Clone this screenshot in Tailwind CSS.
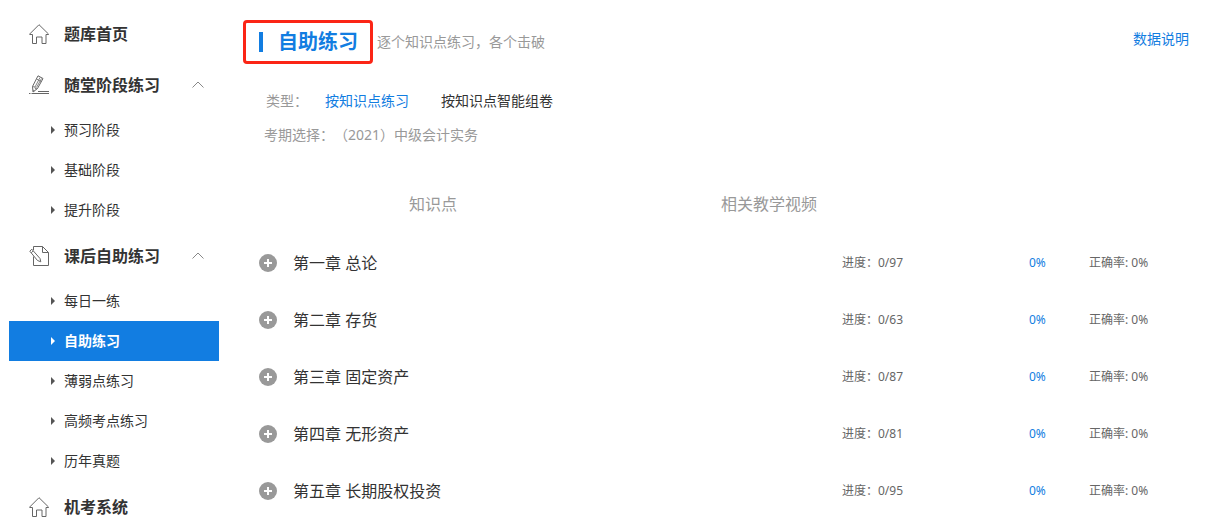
<!DOCTYPE html>
<html lang="zh-CN">
<head>
  <meta charset="UTF-8">
  <meta name="viewport" content="width=device-width, initial-scale=1">
  <title>自助练习</title>
  <script src="https://cdn.jsdelivr.net/npm/@tailwindcss/browser@4"></script>
</head>
<body class="bg-white text-[#333] font-['Noto_Sans','Noto_Sans_CJK_SC',sans-serif]">
  <!-- Shared icons -->
  <svg class="hidden">
    <symbol id="icon-home" viewBox="0 0 20 20">
      <path d="M10 .7L.7 10v.5h2.8v9h4v-6.500h5.500v6.500h4v-9h2.500v-.5z" fill="none" stroke="#666" stroke-width="1"/>
    </symbol>
    <symbol id="icon-arrow" viewBox="0 0 4 8">
      <path d="M0 0l4 4-4 4z" fill="currentColor"/>
    </symbol>
    <symbol id="icon-up" viewBox="0 0 12 7">
      <path d="M.5 6.500L6 1l5.500 5.500" fill="none" stroke="#888" stroke-width="1"/>
    </symbol>
    <symbol id="icon-plus" viewBox="0 0 18 18">
      <circle cx="9" cy="9" r="9" fill="#999"/>
      <path d="M9 5v8M5 9h8" stroke="#fff" stroke-width="2"/>
    </symbol>
  </svg>

  <div class="flex">
    <!-- Sidebar -->
    <nav class="w-[210px] shrink-0 ml-[9px] pt-2">
      <a href="#" class="flex items-center h-[51px] pl-5 gap-[15px] font-bold">
        <svg class="w-5 h-5"><use href="#icon-home"/></svg>
        题库首页
      </a>

      <button type="button" class="flex items-center w-full h-[51px] pl-5 pr-[15px] gap-[15px] font-bold">
        <svg class="w-5 h-5" viewBox="0 0 20 20" fill="none" stroke="#666">
          <path d="M3.500 11.500L9 .8l5 2.700L8.500 13.500l-4.500 3.500z"/>
          <path d="M3.500 11.500l2.500.5.500 2 2-.5M4 15l1.500 1M7.500 4l4.800 2.600M6 12L11 2.500M7.500 12.500l5-9" stroke-width=".8"/>
          <path d="M0 18.500h1.500M2.500 18.500H20M9 16.500h11"/>
        </svg>
        随堂阶段练习
        <svg class="w-3 h-[7px] ml-auto"><use href="#icon-up"/></svg>
      </button>
      <ul class="text-sm">
        <li><a href="#" class="flex items-center h-10 pl-[42px] gap-[9px]"><svg class="w-1 h-2 text-[#555]"><use href="#icon-arrow"/></svg>预习阶段</a></li>
        <li><a href="#" class="flex items-center h-10 pl-[42px] gap-[9px]"><svg class="w-1 h-2 text-[#555]"><use href="#icon-arrow"/></svg>基础阶段</a></li>
        <li><a href="#" class="flex items-center h-10 pl-[42px] gap-[9px]"><svg class="w-1 h-2 text-[#555]"><use href="#icon-arrow"/></svg>提升阶段</a></li>
      </ul>

      <button type="button" class="flex items-center w-full h-[51px] pl-5 pr-[15px] gap-[15px] font-bold">
        <svg class="w-5 h-5" viewBox="0 0 20 20" fill="none" stroke="#666">
          <path d="M4.500 4V.5h9l6 6v13h-15v-9M13.500.5v6h6"/>
          <path d="M.8 5.200l2-2L11 12.500l.8 3.300-3.300-1.300zM2.300 6.800l2-2"/>
        </svg>
        课后自助练习
        <svg class="w-3 h-[7px] ml-auto"><use href="#icon-up"/></svg>
      </button>
      <ul class="text-sm">
        <li><a href="#" class="flex items-center h-10 pl-[42px] gap-[9px]"><svg class="w-1 h-2 text-[#555]"><use href="#icon-arrow"/></svg>每日一练</a></li>
        <li><a href="#" class="flex items-center h-10 pl-[42px] gap-[9px] bg-[#127de1] text-white font-bold"><svg class="w-1 h-2"><use href="#icon-arrow"/></svg>自助练习</a></li>
        <li><a href="#" class="flex items-center h-10 pl-[42px] gap-[9px]"><svg class="w-1 h-2 text-[#555]"><use href="#icon-arrow"/></svg>薄弱点练习</a></li>
        <li><a href="#" class="flex items-center h-10 pl-[42px] gap-[9px]"><svg class="w-1 h-2 text-[#555]"><use href="#icon-arrow"/></svg>高频考点练习</a></li>
        <li><a href="#" class="flex items-center h-10 pl-[42px] gap-[9px]"><svg class="w-1 h-2 text-[#555]"><use href="#icon-arrow"/></svg>历年真题</a></li>
      </ul>

      <a href="#" class="flex items-center h-[51px] pl-5 gap-[15px] font-bold">
        <svg class="w-5 h-5"><use href="#icon-home"/></svg>
        机考系统
      </a>
    </nav>

    <!-- Main content -->
    <main class="flex-1 pl-6 pr-[39px] pt-5 text-sm">
      <header class="flex items-center">
        <div class="flex items-center h-11 pl-[13px] pr-3 gap-[15px] border-3 border-[#fb2516] rounded">
          <span class="w-1 h-5 bg-[#127de1]"></span>
          <h1 class="text-xl font-bold text-[#127de1]">自助练习</h1>
        </div>
        <p class="ml-1 text-[#999]">逐个知识点练习，各个击破</p>
        <a href="#" class="ml-auto mb-1.5 text-[#127de1]">数据说明</a>
      </header>

      <div class="flex items-center h-[34px] mt-5 pl-[23px] text-[#999]">
        <span class="w-[59px]">类型：</span>
        <a href="#" class="mr-8 text-[#127de1]">按知识点练习</a>
        <a href="#" class="text-[#333]">按知识点智能组卷</a>
      </div>
      <div class="flex items-center h-[34px] pl-[21px] text-[#999]">
        <span>考期选择：</span>
        <span>（2021）中级会计实务</span>
      </div>

      <div class="mt-[22px] pl-4">
        <table class="w-full table-fixed text-xs text-[#666]">
          <thead>
            <tr class="h-[60px] text-base text-[#999]">
              <th class="font-normal">知识点</th>
              <th class="w-[324px] font-normal">相关教学视频</th>
              <th class="w-[138px]"></th>
              <th class="w-[120px]"></th>
            </tr>
          </thead>
          <tbody>
            <tr class="h-[57px]">
              <td><div class="flex items-center gap-4 text-base text-[#333]"><button type="button" aria-label="展开"><svg class="w-[18px] h-[18px]"><use href="#icon-plus"/></svg></button>第一章 总论</div></td>
              <td class="pl-[235px]">进度：0/97</td>
              <td class="pl-[98px] text-[#127de1]">0%</td>
              <td class="pl-5">正确率: 0%</td>
            </tr>
            <tr class="h-[57px]">
              <td><div class="flex items-center gap-4 text-base text-[#333]"><button type="button" aria-label="展开"><svg class="w-[18px] h-[18px]"><use href="#icon-plus"/></svg></button>第二章 存货</div></td>
              <td class="pl-[235px]">进度：0/63</td>
              <td class="pl-[98px] text-[#127de1]">0%</td>
              <td class="pl-5">正确率: 0%</td>
            </tr>
            <tr class="h-[57px]">
              <td><div class="flex items-center gap-4 text-base text-[#333]"><button type="button" aria-label="展开"><svg class="w-[18px] h-[18px]"><use href="#icon-plus"/></svg></button>第三章 固定资产</div></td>
              <td class="pl-[235px]">进度：0/87</td>
              <td class="pl-[98px] text-[#127de1]">0%</td>
              <td class="pl-5">正确率: 0%</td>
            </tr>
            <tr class="h-[57px]">
              <td><div class="flex items-center gap-4 text-base text-[#333]"><button type="button" aria-label="展开"><svg class="w-[18px] h-[18px]"><use href="#icon-plus"/></svg></button>第四章 无形资产</div></td>
              <td class="pl-[235px]">进度：0/81</td>
              <td class="pl-[98px] text-[#127de1]">0%</td>
              <td class="pl-5">正确率: 0%</td>
            </tr>
            <tr class="h-[57px]">
              <td><div class="flex items-center gap-4 text-base text-[#333]"><button type="button" aria-label="展开"><svg class="w-[18px] h-[18px]"><use href="#icon-plus"/></svg></button>第五章 长期股权投资</div></td>
              <td class="pl-[235px]">进度：0/95</td>
              <td class="pl-[98px] text-[#127de1]">0%</td>
              <td class="pl-5">正确率: 0%</td>
            </tr>
          </tbody>
        </table>
      </div>
    </main>
  </div>
</body>
</html>
